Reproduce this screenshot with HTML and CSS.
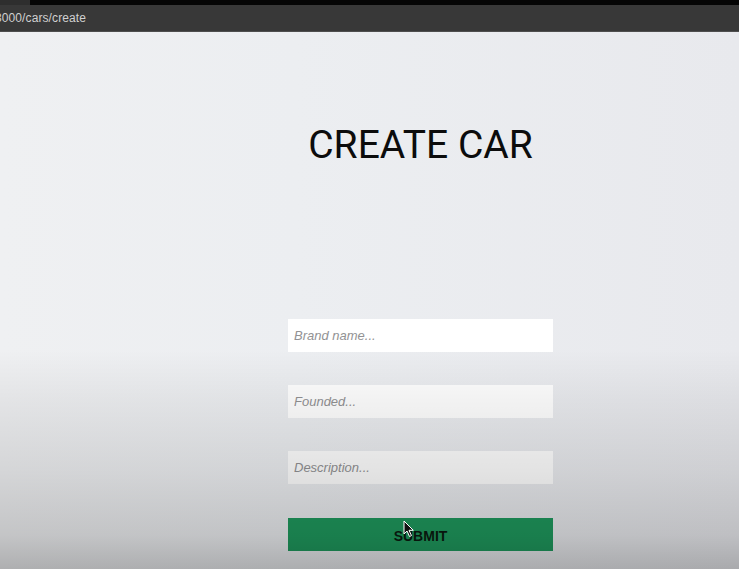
FILE: index.html
```html
<!DOCTYPE html>
<html lang="en">
<head>
<meta charset="utf-8">
<title>Create car</title>
<link rel="stylesheet" href="styles.css">
</head>
<body>
<div class="chrome">
  <div class="tabstrip"><span class="tabstub"></span></div>
  <div class="addressbar"><span class="url">3000/cars/create</span></div>
</div>
<main class="page">
  <h1 class="title">CREATE CAR</h1>
  <form class="car-form">
    <input class="field" type="text" placeholder="Brand name...">
    <input class="field" type="text" placeholder="Founded...">
    <input class="field" type="text" placeholder="Description...">
    <button class="submit" type="button">SUBMIT</button>
  </form>
</main>
<div class="vignette"></div>
<svg class="cursor" width="12" height="18" viewBox="0 0 12 18"><path d="M1 1 L1 14 L4 11 L6.5 16.5 L8.5 15.6 L6 10.3 L10.3 10.3 Z" fill="#111" stroke="#fff" stroke-width="1"/></svg>
</body>
</html>
```
FILE: styles.css
```css
html, body {
  margin: 0;
  padding: 0;
  height: 100%;
}
body {
  background: linear-gradient(90deg, #eff0f2 0%, #eceef1 40%, #e8e9ed 100%);
  font-family: "Liberation Sans", Arial, sans-serif;
  overflow: hidden;
  position: relative;
}
.chrome {
  display: flex;
  flex-direction: column;
}
.tabstrip {
  height: 5px;
  background: #050505;
  display: flex;
}
.tabstub {
  width: 30px;
  background: #2e2e2e;
}
.addressbar {
  height: 26px;
  background: #383838;
  border-bottom: 1px solid #4e4e4e;
  display: flex;
  align-items: center;
  overflow: hidden;
}
.url {
  color: #d0d0d0;
  font-size: 12px;
  margin-left: -5px;
  letter-spacing: 0.1px;
}
.page {
  display: flex;
  flex-direction: column;
  align-items: center;
  padding-left: 102px;
}
.title {
  font-family: Roboto, "Liberation Sans", sans-serif;
  font-weight: 400;
  font-size: 39px;
  line-height: 48px;
  color: #0c0c0c;
  margin: 89px 0 0 0;
}
.car-form {
  margin-top: 150px;
  width: 265px;
  display: flex;
  flex-direction: column;
  gap: 33px;
}
.field {
  height: 33px;
  box-sizing: border-box;
  border: none;
  outline: none;
  background: #ffffff;
  padding: 0 6px;
  font-family: "Liberation Sans", Arial, sans-serif;
  font-size: 13px;
  font-style: italic;
}
.field::placeholder {
  color: #929294;
}
.submit {
  height: 33px;
  margin-top: 1px;
  border: none;
  background: #1f9a5e;
  color: #0a1a10;
  font-family: "Liberation Sans", Arial, sans-serif;
  font-weight: 700;
  font-size: 14px;
  padding: 2px 0 0 0;
}
.vignette {
  position: absolute;
  left: 0;
  right: 0;
  top: 0;
  height: 569px;
  pointer-events: none;
  background: linear-gradient(180deg,
    rgba(0,0,0,0) 0px,
    rgba(0,0,0,0) 350px,
    rgba(0,0,0,0.05) 400px,
    rgba(0,0,0,0.11) 470px,
    rgba(0,0,0,0.18) 535px,
    rgba(0,0,0,0.27) 569px);
}
.cursor {
  position: absolute;
  left: 403px;
  top: 520px;
}
```
